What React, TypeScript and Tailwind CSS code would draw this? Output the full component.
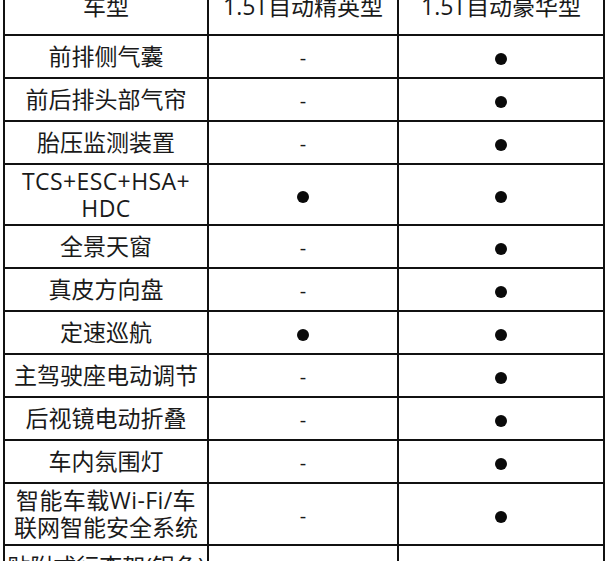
const rows: { name: string[]; a: string; b: string; h: number }[] = [
  { name: ["前排侧气囊"], a: "-", b: "●", h: 43 },
  { name: ["前后排头部气帘"], a: "-", b: "●", h: 43 },
  { name: ["胎压监测装置"], a: "-", b: "●", h: 43 },
  { name: ["TCS+ESC+HSA+", "HDC"], a: "●", b: "●", h: 61 },
  { name: ["全景天窗"], a: "-", b: "●", h: 43 },
  { name: ["真皮方向盘"], a: "-", b: "●", h: 43 },
  { name: ["定速巡航"], a: "●", b: "●", h: 43 },
  { name: ["主驾驶座电动调节"], a: "-", b: "●", h: 43 },
  { name: ["后视镜电动折叠"], a: "-", b: "●", h: 43 },
  { name: ["车内氛围灯"], a: "-", b: "●", h: 43 },
  { name: ["智能车载Wi-Fi/车", "联网智能安全系统"], a: "-", b: "●", h: 62 },
  { name: ["贴附式行李架(银色)"], a: "-", b: "●", h: 43 },
]

function Mark({ v }: { v: string }) {
  if (v === "●") return <span className="inline-block h-[12px] w-[12px] rounded-full bg-[#0a0a0a]" />
  return <span className="text-[20px]">-</span>
}

export default function App() {
  return (
    <div
      className="h-[561px] w-[606px] overflow-hidden bg-white pl-[3px] text-[#1a1a1a]"
      style={{ fontFamily: '"Open Sans", "Noto Sans CJK SC", sans-serif' }}
    >
      <table className="mt-[-24px] w-[600px] table-fixed border-collapse text-[23px]">
        <colgroup>
          <col className="w-[204px]" />
          <col className="w-[190px]" />
          <col className="w-[206px]" />
        </colgroup>
        <tbody>
          <tr className="h-[58px]">
            <td className="border-2 border-[#111] text-center">车型</td>
            <td className="border-2 border-[#111] text-center">1.5T自动精英型</td>
            <td className="border-2 border-[#111] text-center">1.5T自动豪华型</td>
          </tr>
          {rows.map((r, i) => (
            <tr key={i} style={{ height: r.h }}>
              <td className="overflow-hidden whitespace-nowrap border-2 border-[#111] p-0 text-center leading-[27px]">
                {r.name.map((l, j) => (
                  <div key={j} className={/[A-Z]/.test(l) ? "tracking-[0.4px]" : ""}>
                    {l}
                  </div>
                ))}
              </td>
              <td className="border-2 border-[#111] p-0 text-center">
                <Mark v={r.a} />
              </td>
              <td className="border-2 border-[#111] p-0 text-center">
                <Mark v={r.b} />
              </td>
            </tr>
          ))}
        </tbody>
      </table>
    </div>
  )
}
